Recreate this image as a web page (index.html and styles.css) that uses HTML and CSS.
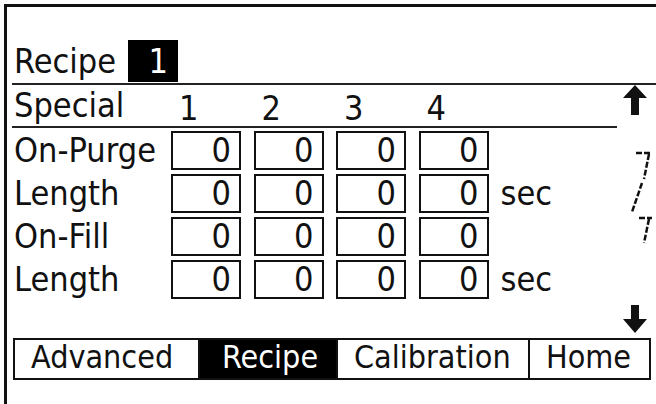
FILE: index.html
```html
<!DOCTYPE html>
<html lang="en">
<head>
<meta charset="UTF-8">
<title>Recipe - Special</title>
<link rel="stylesheet" href="styles.css">
</head>
<body>
<div class="screen">
  <div class="title">
    <span class="title-text">Recipe</span>
    <span class="recipe-no">1</span>
  </div>
  <div class="rule-full"></div>
  <div class="main">
    <div class="left">
      <div class="special-row">
        <span class="label">Special</span>
        <span class="col-head">1</span>
        <span class="col-head">2</span>
        <span class="col-head">3</span>
        <span class="col-head">4</span>
      </div>
      <div class="rule"></div>
      <div class="rows">
        <div class="row">
          <span class="label">On-Purge</span>
          <span class="box">0</span><span class="box">0</span><span class="box">0</span><span class="box">0</span>
        </div>
        <div class="row">
          <span class="label">Length</span>
          <span class="box">0</span><span class="box">0</span><span class="box">0</span><span class="box">0</span>
          <span class="unit">sec</span>
        </div>
        <div class="row">
          <span class="label">On-Fill</span>
          <span class="box">0</span><span class="box">0</span><span class="box">0</span><span class="box">0</span>
        </div>
        <div class="row">
          <span class="label">Length</span>
          <span class="box">0</span><span class="box">0</span><span class="box">0</span><span class="box">0</span>
          <span class="unit">sec</span>
        </div>
      </div>
    </div>
    <div class="side">
      <svg class="arrow-up" width="26" height="30" viewBox="0 0 26 30">
        <polygon points="13,0 25,13 17,13 17,30 9,30 9,13 1,13" fill="#111"/>
      </svg>
      <svg class="scroll" width="24" height="100" viewBox="0 0 24 100">
        <g stroke="#111" stroke-width="2.5" fill="none" stroke-dasharray="6 2">
          <polyline points="6,3 22,3"/>
          <polyline points="19,4 14,29"/>
          <polyline points="12,33 2,62"/>
          <polyline points="9,68 22,68"/>
          <polyline points="19,69 14,93"/>
        </g>
      </svg>
      <svg class="arrow-down" width="26" height="28" viewBox="0 0 26 28">
        <polygon points="9,0 17,0 17,14 25,14 13,28 1,14 9,14" fill="#111"/>
      </svg>
    </div>
  </div>
  <div class="tabs">
    <div class="tab tab-advanced">Advanced</div>
    <div class="tab tab-recipe active">Recipe</div>
    <div class="tab tab-calibration">Calibration</div>
    <div class="tab tab-home">Home</div>
  </div>
</div>
</body>
</html>
```

FILE: styles.css
```css
body {
  margin: 0;
  padding: 0;
  background-color: white;
  font-family: "DejaVu Sans Condensed", "DejaVu Sans", sans-serif;
  font-stretch: condensed;
  font-size: 34px;
  color: #111;
}
.screen {
  margin: 4px 0 0 4px;
  padding: 33px 0 0 5px;
  height: 400px;
  box-sizing: border-box;
  border-top: 3px solid #111;
  border-left: 3px solid #111;
}
.title {
  display: flex;
  align-items: center;
  height: 42px;
  padding-left: 2px;
}
.title-text {
  width: 114px;
}
.recipe-no {
  width: 50px;
  height: 42px;
  line-height: 42px;
  box-sizing: border-box;
  padding-right: 10px;
  text-align: right;
  background-color: #000;
  color: white;
}
.rule-full {
  height: 2px;
  margin-top: 1px;
  background-color: #222;
}
.main {
  display: flex;
}
.left {
  width: 610px;
}
.special-row {
  display: flex;
  height: 41px;
  line-height: 41px;
}
.label {
  width: 157px;
  padding-left: 2px;
  flex-shrink: 0;
}
.col-head {
  width: 70px;
  margin-right: 12.5px;
  padding-left: 8px;
  box-sizing: border-box;
  padding-top: 3px;
}
.rule {
  height: 2px;
  background-color: #222;
}
.rows {
  margin-top: 3px;
}
.row {
  display: flex;
  height: 39px;
  line-height: 39px;
  margin-bottom: 4px;
}
.box {
  width: 70px;
  height: 39px;
  line-height: 35px;
  box-sizing: border-box;
  border: 2px solid #111;
  margin-right: 12.5px;
  padding-right: 8px;
  text-align: right;
}
.unit {
  margin-left: -0.5px;
}
.side {
  width: 34px;
  display: flex;
  flex-direction: column;
  padding-left: 5px;
}
.arrow-up {
  display: block;
}
.scroll {
  display: block;
  margin-top: 35px;
  margin-left: 8px;
}
.arrow-down {
  display: block;
  margin-top: 55px;
  margin-bottom: 5px;
}
.tabs {
  display: flex;
  width: 638px;
  height: 42px;
  box-sizing: border-box;
  margin-left: 1px;
  border: 2px solid #111;
  font-size: 32px;
}
.tab {
  box-sizing: border-box;
  height: 38px;
  line-height: 34px;
  padding-left: 16px;
  border-right: 2px solid #111;
  white-space: nowrap;
}
.tab-advanced {
  width: 185px;
}
.tab-recipe {
  width: 138px;
  padding-left: 22px;
}
.tab-calibration {
  width: 192px;
}
.tab-home {
  width: 119px;
  border-right: none;
}
.active {
  background-color: #000;
  color: white;
}
```
